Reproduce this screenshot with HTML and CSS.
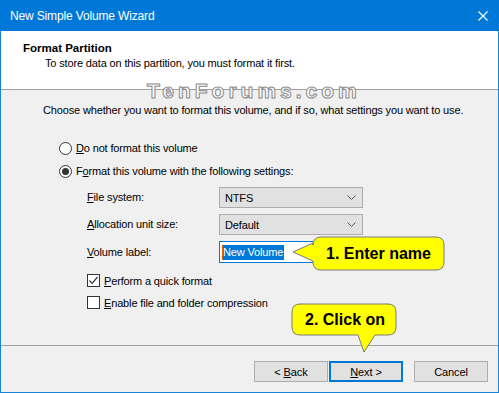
FILE: index.html
```html
<!DOCTYPE html>
<html>
<head>
<meta charset="utf-8">
<link rel="stylesheet" href="styles.css">
</head>
<body>
<div class="window">
  <div class="titlebar">
    <span class="title">New Simple Volume Wizard</span>
    <svg class="close" width="10" height="10" viewBox="0 0 10 10"><path d="M0.5 0.5 L9.5 9.5 M9.5 0.5 L0.5 9.5" stroke="#fff" stroke-width="1.1" fill="none"/></svg>
  </div>
  <div class="header">
    <div class="h-title">Format Partition</div>
    <div class="h-sub">To store data on this partition, you must format it first.</div>
  </div>
  <div class="body">
    <p class="intro">Choose whether you want to format this volume, and if so, what settings you want to use.</p>
    <div class="options">
      <div class="radio-row"><span class="radio"></span><span><u>D</u>o not format this volume</span></div>
      <div class="radio-row"><span class="radio checked"></span><span>F<u>o</u>rmat this volume with the following settings:</span></div>
    </div>
    <div class="settings">
      <span class="lbl"><u>F</u>ile system:</span>
      <div class="combo"><span>NTFS</span><svg class="chev" width="9" height="5" viewBox="0 0 9 5"><path d="M0.5 0.5 L4.5 4.5 L8.5 0.5" stroke="#555" fill="none"/></svg></div>
      <span class="lbl"><u>A</u>llocation unit size:</span>
      <div class="combo"><span>Default</span><svg class="chev" width="9" height="5" viewBox="0 0 9 5"><path d="M0.5 0.5 L4.5 4.5 L8.5 0.5" stroke="#555" fill="none"/></svg></div>
      <span class="lbl"><u>V</u>olume label:</span>
      <div class="textbox"><span class="caret"></span><span class="sel">New Volume</span></div>
    </div>
    <div class="checks">
      <div class="check-row"><span class="checkbox"><svg width="11" height="11" viewBox="0 0 11 11"><path d="M1.5 5.5 L4.2 8.3 L9.5 2" stroke="#333" stroke-width="1.2" fill="none"/></svg></span><span><u>P</u>erform a quick format</span></div>
      <div class="check-row"><span class="checkbox"></span><span><u>E</u>nable file and folder compression</span></div>
    </div>
  </div>
  <div class="footer">
    <button class="btn">&lt; <u>B</u>ack</button>
    <button class="btn default"><u>N</u>ext &gt;</button>
    <button class="btn cancel">Cancel</button>
  </div>

  <div class="watermark">TenForums.com</div>

  <div class="callout c1">
    <svg width="156" height="37" viewBox="0 0 156 37"><path d="M31 2 H146 Q154 2 154 10 V27 Q154 35 146 35 H31 Q23 35 23 27 V26 L3 17 L23 8 V10 Q23 2 31 2 Z" fill="#ffff00" stroke="#7a7a7a" stroke-width="1"/></svg>
    <span class="c-text">1. Enter name</span>
  </div>
  <div class="callout c2">
    <svg width="108" height="53" viewBox="0 0 108 53"><path d="M10 2 H98 Q106 2 106 10 V25 Q106 33 98 33 H85 L74 50 L68 33 H10 Q2 33 2 25 V10 Q2 2 10 2 Z" fill="#ffff00" stroke="#7a7a7a" stroke-width="1"/></svg>
    <span class="c-text">2. Click on</span>
  </div>
</div>
</body>
</html>
```

FILE: styles.css
```css
* { box-sizing: border-box; }
html, body { margin: 0; padding: 0; }
body { width: 499px; height: 393px; overflow: hidden; background: #f0f0f0; }

.window {
  position: relative;
  width: 499px;
  height: 393px;
  border: 1px solid #1883d7;
  background: #f0f0f0;
  font-family: "Liberation Sans", Arial, sans-serif;
  font-size: 11px;
  letter-spacing: -0.15px;
  color: #000;
  display: flex;
  flex-direction: column;
}
u { text-decoration: underline; text-underline-offset: 1px; }

.titlebar {
  background: #0078d7;
  color: #fff;
  display: flex;
  align-items: center;
  justify-content: space-between;
  margin: -1px -1px 0 -1px;
  height: 31px;
  padding-left: 10px;
  padding-right: 11px;
}
.title { font-size: 12px; letter-spacing: -0.15px; }

.header {
  height: 59px;
  background: #fff;
  border-bottom: 1px solid #a0a0a0;
  padding: 10px 0 0 22px;
}
.h-title { font-weight: bold; font-size: 11.5px; line-height: 15px; letter-spacing: 0; }
.h-sub { line-height: 14px; padding-left: 22px; }

.body {
  height: 255px;
  padding: 13px 0 0 0;
  display: flex;
  flex-direction: column;
}
.intro { margin: 0 0 0 42px; line-height: 15px; }

.options { margin: 22px 0 0 58px; display: flex; flex-direction: column; gap: 7px; }
.radio-row { display: flex; align-items: center; gap: 4px; height: 16px; }
.radio {
  width: 13px; height: 13px; border-radius: 50%;
  border: 1px solid #333; background: #fff;
  display: flex; align-items: center; justify-content: center;
}
.radio.checked::after {
  content: ""; width: 7px; height: 7px; border-radius: 50%; background: #333;
}

.settings {
  margin: 8px 0 0 86px;
  display: grid;
  grid-template-columns: 132px 144px;
  row-gap: 6px;
  align-items: center;
}
.lbl { line-height: 15px; }
.combo {
  height: 21px;
  border: 1px solid #adadad;
  background: #e1e1e1;
  display: flex;
  align-items: center;
  justify-content: space-between;
  padding: 0 6px 0 5px;
}
.textbox {
  height: 22px;
  border: 1px solid #0078d7;
  background: #fff;
  display: flex;
  align-items: center;
  padding-left: 2px;
}
.caret { width: 1px; height: 15px; background: #e35b00; }
.sel { background: #0078d7; color: #fff; line-height: 15px; padding-right: 1px; }

.checks { margin: 10px 0 0 86px; display: flex; flex-direction: column; gap: 7px; }
.check-row { display: flex; align-items: center; gap: 4px; height: 15px; }
.checkbox {
  width: 13px; height: 13px; border: 1px solid #333; background: #fff;
  display: flex; align-items: center; justify-content: center;
}

.footer {
  height: 46px;
  border-top: 1px solid #a0a0a0;
  display: flex;
  justify-content: flex-end;
  align-items: flex-start;
  padding: 15px 10px 0 0;
}
.btn {
  width: 74px; height: 21px;
  border: 1px solid #adadad;
  background: #e1e1e1;
  font-family: inherit;
  font-size: 11px;
  letter-spacing: -0.1px;
  color: #000;
  padding: 0;
  margin-left: 1px;
}
.btn.default { border: 2px solid #0078d7; }
.btn.cancel { margin-left: 11px; }

.watermark {
  position: absolute;
  left: 146px;
  top: 78px;
  font-family: "Liberation Sans", Arial, sans-serif;
  font-weight: bold;
  font-size: 21px;
  letter-spacing: 4px;
  color: #fff;
  -webkit-text-stroke: 1px #8a8a8a;
  line-height: 24px;
}

.callout { position: absolute; }
.callout svg { position: absolute; left: 0; top: 0; }
.c-text {
  position: absolute;
  font-family: "Liberation Sans", Arial, sans-serif;
  font-weight: bold;
  font-size: 16px;
  letter-spacing: 0;
  line-height: 18px;
  color: #000;
  white-space: nowrap;
}
.c1 { left: 289px; top: 234px; width: 156px; height: 37px; }
.c1 .c-text { left: 36px; top: 10px; }
.c2 { left: 289px; top: 301px; width: 108px; height: 53px; }
.c2 .c-text { left: 15px; top: 9px; }
```
